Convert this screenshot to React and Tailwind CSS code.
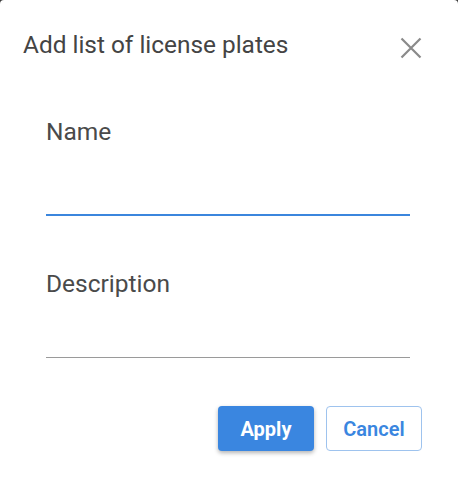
export default function App() {
  return (
    <div className="min-h-[484px] w-[458px] bg-[#3a3a3a]" style={{ fontFamily: "Roboto, 'Liberation Sans', sans-serif" }}>
      <div className="flex h-[484px] flex-col rounded-t-[4px] bg-white">
        {/* Header */}
        <div className="flex items-start justify-between pl-[23px] pr-[36px] pt-[31px]">
          <h2 className="text-[24.4px] leading-[28px] text-[#444]">Add list of license plates</h2>
          <button className="mt-[6px] text-[#8a8a8a]">
            <svg width="22" height="22" viewBox="0 0 22 22" fill="none" stroke="currentColor" strokeWidth="2.2">
              <path d="M1.5 1.5L20.5 20.5M20.5 1.5L1.5 20.5" />
            </svg>
          </button>
        </div>

        {/* Fields */}
        <div className="flex flex-col pl-[46px] pr-[48px]">
          <label className="mt-[61px] block text-[24.5px] leading-[24px] text-[#4a4a4a]">Name</label>
          <input className="mt-[48px] h-[24px] w-full border-b-2 border-[#3b86dd] outline-none" />
          <label className="mt-[56px] block text-[24.5px] leading-[24px] text-[#4a4a4a]">Description</label>
          <input className="mt-[38px] h-[24px] w-full border-b border-[#9a9a9a] outline-none" />
        </div>

        {/* Actions */}
        <div className="mt-[48px] flex justify-end gap-[12px] pr-[36px]">
          <button className="h-[45px] w-[96px] rounded-[4px] bg-[#3a86e0] text-[20px] font-bold text-white shadow-[0_2px_4px_rgba(0,0,0,0.3)]">
            Apply
          </button>
          <button className="h-[45px] w-[96px] rounded-[4px] border border-[#9ec3ee] bg-white text-[20px] font-semibold text-[#3a86e0]">
            Cancel
          </button>
        </div>
      </div>
    </div>
  );
}
